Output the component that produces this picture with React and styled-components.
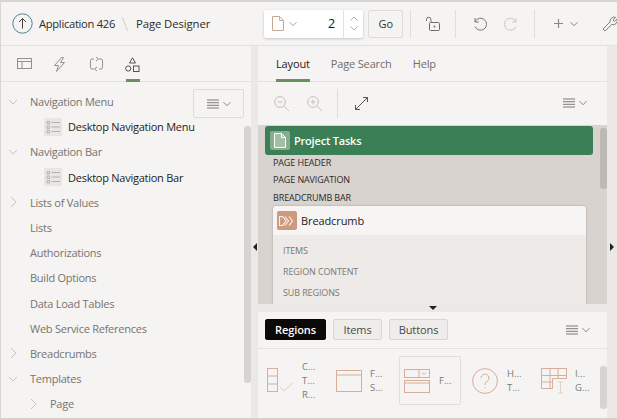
import React from "react";
import styled, { createGlobalStyle } from "styled-components";

const Global = createGlobalStyle`
  html, body { margin: 0; padding: 0; background: #f5f4f2; overflow: hidden; }
  * { box-sizing: border-box; }
  body { font-family: "Open Sans", "Noto Sans", sans-serif; }
`;

const Page = styled.div`
  width: 617px; height: 419px; display: flex; flex-direction: column; overflow: hidden;
  background: #f5f4f2; border-top: 2px solid #d6d5d3; border-left: 1px solid #d6d5d3; border-bottom: 1px solid #d0cfcd;
`;
const Header = styled.header`
  height: 44px; flex: none; display: flex; align-items: center; border-bottom: 1px solid #e3e1de; padding-left: 11px; white-space: nowrap;
`;
const Crumb = styled.span`
  font-size: ${p => p.$fs}px; color: #2b2b2b; letter-spacing: ${p => p.$ls}px;
  margin-left: ${p => p.$ml || 0}px;
`;
const Slash = styled.svg`margin-left: 7px; flex: none;`;
const PageBox = styled.div`
  margin-left: 54px; width: 99px; height: 28px; background: #fff; display: flex; align-items: center; padding-left: 8px;
  box-shadow: 0 1px 3px rgba(0,0,0,.2); border-radius: 2px; flex: none;
`;
const PageNum = styled.span`
  flex: 1; text-align: right; padding-right: 8px; font-size: 12.5px; color: #111;
`;
const Stepper = styled.div`
  width: 20px; height: 100%; border-left: 1px solid #e3e1de; display: flex; flex-direction: column; align-items: center; justify-content: space-around; padding: 4px 0;
`;
const GoButton = styled.button`
  margin-left: 5px; width: 35px; height: 28px; background: #f5f4f2; border: 1px solid #dedcd9; border-radius: 2px; padding: 0; font: inherit; font-size: 11px; color: #333; flex: none;
`;
const Divider = styled.span`
  width: 1px; height: ${p => p.$h || 28}px; background: #dfddda; flex: none; margin-left: ${p => p.$ml || 0}px;
`;
const HeadIcon = styled.svg`flex: none; margin-left: ${p => p.$ml || 0}px; display: block;`;

const Body = styled.div`flex: 1; min-height: 0; display: flex;`;
const LeftPane = styled.section`width: 250px; flex: none; display: flex; flex-direction: column; position: relative; overflow: hidden;`;
const Splitter = styled.div`
  flex: 1; min-width: 0; background: #ebe8e5; display: flex; align-items: center; justify-content: center; padding-top: 29px;
  ${p => p.$w ? `flex: none; width: ${p.$w}px;` : ""}
`;
const TabBar = styled.nav`
  height: 36px; flex: none; display: flex; border-bottom: 1px solid #e3e1de; padding-left: ${p => p.$pl}px; gap: ${p => p.$gap}px;
`;
const IconTab = styled.div`
  width: 14px; padding-top: 11px; height: 36px; border-bottom: ${p => p.$on ? "3px solid #688f5e" : "none"};
  & > svg { display: block; margin-left: -1px; }
`;
const TextTab = styled.div`
  height: 36px; padding-top: 10px; font-size: 11px; letter-spacing: -0.15px; white-space: nowrap;
  color: ${p => p.$on ? "#222" : "#6f6d6b"}; border-bottom: ${p => p.$on ? "3px solid #688f5e" : "none"};
`;
const Tree = styled.ul`list-style: none; margin: 0; padding: 7px 0 0; flex: 1;`;
const Row = styled.li`
  height: 25.2px; display: flex; align-items: center; white-space: nowrap;
  padding-left: ${p => p.$pl || 0}px;
`;
const Twist = styled.svg`width: 10px; height: 10px; margin-left: 7px; flex: none; display: block;`;
const NodeLabel = styled.span`
  font-size: 11px; letter-spacing: -0.25px; color: ${p => p.$dark ? "#1d1d1d" : "#77736f"};
  margin-left: ${p => p.$ml}px;
`;
const ListIcon = styled.span`
  width: 18px; height: 18px; background: #e8e6e3; border-radius: 1px; display: block; flex: none;
  & > svg { display: block; }
`;
const MenuButton = styled.div`
  position: absolute; left: 192px; top: 43px; width: 51px; height: 29px; border: 1px solid #dedcd9; background: #f5f4f2; border-radius: 2px;
  display: flex; align-items: center; justify-content: center; gap: 4px;
`;
const ScrollThumb = styled.div`
  position: absolute; left: ${p => p.$l}px; top: ${p => p.$t}px; width: 7px; height: ${p => p.$h}px; background: ${p => p.$c || "#d6d4d1"}; border-radius: 3px;
`;
const RightPane = styled.section`width: 349px; flex: none; display: flex; flex-direction: column; min-height: 0;`;
const Toolbar = styled.div`
  height: 39px; flex: none; display: flex; align-items: center; padding: 3px 20px 0 16px;
`;
const Push = styled.div`flex: 1;`;
const MenuGlyph = styled.span`display: flex; align-items: center; gap: 4px;`;
const Canvas = styled.div`
  margin-top: 4px; flex: 1; min-height: 0; background: #d8d3cf; position: relative; overflow: hidden; padding: 1px 14px 0 7px;
`;
const PageBar = styled.div`
  height: 29px; background: #3a7f56; border-radius: 3px; display: flex; align-items: center; padding-left: 5px; color: #fff; font-size: 11px; font-weight: 600; letter-spacing: -0.2px;
`;
const BadgeIcon = styled.span`
  width: 20px; height: 19px; border-radius: 2px; background: ${p => p.$bg}; display: flex; align-items: center; justify-content: center; margin-right: 4px; flex: none;
`;
const Slot = styled.div`
  font-size: 9px; line-height: 17.5px; height: 17.5px; color: #2c2a28; padding-left: 8px; white-space: nowrap; letter-spacing: -0.12px;
`;
const SlotList = styled.div`margin-top: -1.5px;`;
const RegionCard = styled.div`
  margin: 0 7px 0 8px; border-radius: 3px 3px 0 0; background: #edeae7; box-shadow: 0 0 2px rgba(0,0,0,.3); height: 120px;
`;
const CardHead = styled.div`
  height: 29px; background: #f6f5f3; border-radius: 3px 3px 0 0; display: flex; align-items: center; padding-left: 4px; font-size: 11px; color: #1c1c1c; letter-spacing: -0.1px;
`;
const CardSlots = styled.div`padding: 5px 0 0 10px;`;
const CardSlot = styled.div`
  font-size: 9px; height: 21px; line-height: 21px; color: #7c7874; white-space: nowrap; letter-spacing: -0.12px;
`;
const HSplit = styled.div`
  height: 8px; flex: none; background: #ebe8e5; display: flex; align-items: center; justify-content: center; padding-left: 1px;
`;
const Gallery = styled.div`flex: none; height: 106px; display: flex; flex-direction: column; position: relative;`;
const GalleryBar = styled.div`
  height: 37px; flex: none; display: flex; align-items: center; border-bottom: 1px solid #e3e1de; padding: 0 17px 1px 7px; gap: 7px;
`;
const Pill = styled.button`
  height: 21px; width: ${p => p.$w}px; padding: 0; font: inherit; font-size: 11px; letter-spacing: -0.1px; border-radius: 2px;
  background: ${p => p.$on ? "#0c0a09" : "#efedeb"}; color: ${p => p.$on ? "#fff" : "#4a4846"};
  border: 1px solid ${p => p.$on ? "#0c0a09" : "#d8d6d3"}; font-weight: ${p => p.$on ? 600 : 400};
`;
const ItemRow = styled.div`flex: 1; display: flex; padding: 7px 0 0 6px;`;
const Item = styled.div`
  height: 49px; width: ${p => p.$w}px; flex: none; display: flex; align-items: center; padding-left: ${p => p.$pl}px;
  border: 1px solid ${p => p.$sel ? "#e1dfdc" : "transparent"}; border-radius: 2px;
  & > svg { display: block; flex: none; }
`;
const ItemText = styled.div`
  margin-left: ${p => p.$ml}px; font-size: 9.5px; color: #7b7976; line-height: 14px; white-space: nowrap;
`;

const Chev = ({ x = 0, c = "#8a8886", s = 8 }) => (
  <svg width={s} height={s} viewBox="0 0 8 8" style={{ display: "block", flex: "none", marginLeft: x }}>
    <path d="M.5 2.2 4 5.8l3.5-3.6" fill="none" stroke={c} strokeWidth="1" />
  </svg>
);
const Burger = () => (
  <svg width="12" height="10" viewBox="0 0 12 10" style={{ display: "block" }}>
    <path d="M0 1h12M0 3.700h12M0 6.300h12M0 9h12" stroke="#7d7b79" strokeWidth="1" />
  </svg>
);
const MenuIcon = () => (<MenuGlyph><Burger /><Chev /></MenuGlyph>);
const Down = () => <Twist viewBox="0 0 10 10"><path d="M1 3l4 4 4-4" fill="none" stroke="#c6c3c0" strokeWidth="1" /></Twist>;
const Right = ({ ml }) => <Twist viewBox="0 0 10 10" style={ml ? { marginLeft: ml } : undefined}><path d="M3 0l5 5-5 5" fill="none" stroke="#c6c3c0" strokeWidth="1" /></Twist>;
const Blank = () => <Twist viewBox="0 0 10 10" />;
const List18 = () => (
  <ListIcon>
    <svg width="18" height="18" viewBox="0 0 18 18" fill="none">
      <path d="M7.500 4.500H16M7.500 9H16M7.500 13.500H16" stroke="#b5b2af" />
      <path d="M3 3.500h2.500v2.500H3zM3 8h2.500v2.500H3zM3 12.500h2.500V15H3z" stroke="#aaa7a4" strokeWidth=".8" />
    </svg>
  </ListIcon>
);
const Arrow = ({ d }) => {
  const p = { l: "M4 0v8L0 4z", r: "M0 0v8l4-4z", d: "M0 0h8L4 4z" }[d];
  return <svg width={d === "d" ? 8 : 4} height={d === "d" ? 4 : 8} viewBox={d === "d" ? "0 0 8 4" : "0 0 4 8"} style={{ display: "block" }}><path d={p} fill="#222" /></svg>;
};
const stroke = "#d6ae9a";
const soft = "#e0d2c6";

export default function App() {
  return (
    <Page>
      <Global />
      <Header>
        <HeadIcon width="21" height="21" viewBox="0 0 21 21" fill="none">
          <circle cx="10.500" cy="10.500" r="9.700" stroke="#4a8590" />
          <path d="M10.500 15.500v-10M7 9l3.500-3.500L14 9" stroke="#444" />
        </HeadIcon>
        <Crumb $ml={6} $fs={11.2} $ls={-0.3}>Application 426</Crumb>
        <Slash width="7" height="14" viewBox="0 0 7 14"><path d="M.5.500l5 13" stroke="#cfcdca" /></Slash>
        <Crumb $ml={7} $fs={11.3} $ls={-0.08}>Page Designer</Crumb>
        <PageBox>
          <svg width="12" height="15" viewBox="0 0 12 15" style={{ flex: "none" }}>
            <path d="M.5.500h7l4 4v10H.5z" fill="#fff" stroke="#c9a68f" /><path d="M7.500.5v4h4" fill="none" stroke="#b9b6b3" />
          </svg>
          <Chev x={5} c="#a3a19f" />
          <PageNum>2</PageNum>
          <Stepper>
            <svg width="8" height="5" viewBox="0 0 8 5"><path d="M.5 4.500 4 1l3.500 3.500" fill="none" stroke="#b5b3b1" /></svg>
            <svg width="8" height="5" viewBox="0 0 8 5"><path d="M.5.500 4 4 7.500.5" fill="none" stroke="#b5b3b1" /></svg>
          </Stepper>
        </PageBox>
        <GoButton>Go</GoButton>
        <Divider $ml={7} />
        <HeadIcon $ml={14} width="16" height="16" viewBox="0 0 16 16" fill="none">
          <rect x="4.500" y="6.500" width="10" height="8" rx="1" stroke="#6e6c6a" />
          <path d="M1.500 5V3.500a2.200 2.200 0 0 1 4.400 0V6" stroke="#6e6c6a" />
          <circle cx="9.500" cy="10.500" r=".9" fill="#6e6c6a" />
        </HeadIcon>
        <Divider $ml={14} />
        <HeadIcon $ml={16} width="15" height="15" viewBox="0 0 15 15" fill="none">
          <path d="M3 2v4h4" stroke="#777" /><path d="M3.200 5.500A6 6 0 1 1 3 10.500" stroke="#777" />
        </HeadIcon>
        <HeadIcon $ml={17} width="15" height="15" viewBox="0 0 15 15" fill="none">
          <path d="M12 2v4H8" stroke="#c9c7c5" /><path d="M11.800 5.500A6 6 0 1 0 12 10.500" stroke="#c9c7c5" />
        </HeadIcon>
        <Divider $ml={15} />
        <HeadIcon $ml={19} width="9" height="9" viewBox="0 0 9 9" fill="none"><path d="M4.500 0v9M0 4.500h9" stroke="#8a8886" strokeWidth="1.2" /></HeadIcon>
        <Chev x={7} />
        <HeadIcon $ml={24} width="16" height="16" viewBox="0 0 16 16" fill="none">
          <path d="M1 13 8 6a4.200 4.200 0 0 1 5.500-4.700L11 4l1.300 1.500L15 3a4.200 4.200 0 0 1-5.300 5.500L3 15z" stroke="#807e7c" />
        </HeadIcon>
      </Header>
      <Body>
        <LeftPane>
          <TabBar $pl={17} $gap={22}>
            <IconTab>
              <svg width="15" height="13" viewBox="0 0 15 13" fill="none">
                <rect x=".5" y="1.500" width="14" height="10" stroke="#94908c" /><path d="M.5 4.500h14M5 4.500v7" stroke="#94908c" />
              </svg>
            </IconTab>
            <IconTab>
              <svg width="13" height="15" viewBox="0 0 13 15" fill="none"><path d="M8.500.5 1.500 8.500h4l-2 6 8-9h-4l3-5z" stroke="#94908c" /></svg>
            </IconTab>
            <IconTab>
              <svg width="15" height="14" viewBox="0 0 15 14" fill="none">
                <path d="M5 2H3a1.500 1.500 0 0 0-1.500 1.500v7A1.500 1.500 0 0 0 3 12h2M10 12h2a1.500 1.500 0 0 0 1.500-1.500v-7A1.500 1.500 0 0 0 12 2h-2" stroke="#94908c" /><path d="M7 0 9.500 2 7 4M8 10l-2.500 2L8 14" stroke="#94908c" />
              </svg>
            </IconTab>
            <IconTab $on>
              <svg width="15" height="15" viewBox="0 0 15 15" fill="none">
                <path d="M7.500.8 10.500 6h-6z" stroke="#55524f" /><circle cx="3.200" cy="11.500" r="2.600" stroke="#55524f" /><rect x="8.500" y="9" width="5.500" height="5.500" stroke="#55524f" />
              </svg>
            </IconTab>
          </TabBar>
          <Tree>
            <Row><Down /><NodeLabel $ml={12}>Navigation Menu</NodeLabel></Row>
            <Row $pl={43}><List18 /><NodeLabel $dark $ml={6}>Desktop Navigation Menu</NodeLabel></Row>
            <Row><Down /><NodeLabel $ml={12}>Navigation Bar</NodeLabel></Row>
            <Row $pl={43}><List18 /><NodeLabel $dark $ml={6}>Desktop Navigation Bar</NodeLabel></Row>
            <Row><Right /><NodeLabel $ml={12}>Lists of Values</NodeLabel></Row>
            <Row><Blank /><NodeLabel $ml={12}>Lists</NodeLabel></Row>
            <Row><Blank /><NodeLabel $ml={12}>Authorizations</NodeLabel></Row>
            <Row><Blank /><NodeLabel $ml={12}>Build Options</NodeLabel></Row>
            <Row><Blank /><NodeLabel $ml={12}>Data Load Tables</NodeLabel></Row>
            <Row><Blank /><NodeLabel $ml={12}>Web Service References</NodeLabel></Row>
            <Row><Right /><NodeLabel $ml={12}>Breadcrumbs</NodeLabel></Row>
            <Row><Down /><NodeLabel $ml={12}>Templates</NodeLabel></Row>
            <Row><Right ml={27} /><NodeLabel $ml={12}>Page</NodeLabel></Row>
          </Tree>
          <MenuButton><MenuIcon /></MenuButton>
          <ScrollThumb $l={243} $t={80} $h={257} />
        </LeftPane>
        <Splitter $w={7}><Arrow d="l" /></Splitter>
        <RightPane>
          <TabBar $pl={18} $gap={21}>
            <TextTab $on>Layout</TextTab>
            <TextTab>Page Search</TextTab>
            <TextTab>Help</TextTab>
          </TabBar>
          <Toolbar>
            <svg width="15" height="15" viewBox="0 0 15 15" fill="none" style={{ display: "block" }}>
              <circle cx="6" cy="6" r="5.400" stroke="#c4c2c0" /><path d="M3.500 6h5M10 10l5 5" stroke="#c4c2c0" />
            </svg>
            <svg width="15" height="15" viewBox="0 0 15 15" fill="none" style={{ display: "block", marginLeft: 18 }}>
              <circle cx="6" cy="6" r="5.400" stroke="#c4c2c0" /><path d="M3.500 6h5M6 3.500v5M10 10l5 5" stroke="#c4c2c0" />
            </svg>
            <Divider $ml={15} $h={29} />
            <svg width="13" height="13" viewBox="0 0 13 13" fill="none" style={{ display: "block", marginLeft: 17 }}>
              <path d="M.5 12.500l12-12M8 .5h4.500V5M.5 8v4.500H5" stroke="#555" />
            </svg>
            <Push />
            <MenuIcon />
          </Toolbar>
          <Canvas>
            <PageBar>
              <BadgeIcon $bg="#88ad8c">
                <svg width="12" height="15" viewBox="0 0 12 15"><path d="M.5.500h7l4 4v10H.5z" fill="rgba(255,255,255,.22)" stroke="#fff" /><path d="M7.500.5v4h4" fill="none" stroke="#fff" /></svg>
              </BadgeIcon>
              Project Tasks
            </PageBar>
            <SlotList>
              <Slot>PAGE HEADER</Slot>
              <Slot>PAGE NAVIGATION</Slot>
              <Slot>BREADCRUMB BAR</Slot>
            </SlotList>
            <RegionCard>
              <CardHead>
                <BadgeIcon $bg="#cc9a7e">
                  <svg width="16" height="10" viewBox="0 0 16 10" fill="none"><path d="M.5.500h3l3.500 4.500L3.500 9.500h-3zM6 .5l3.500 4.500L6 9.500M10 .5l3.500 4.500L10 9.500" stroke="#fbeee6" strokeWidth="1.200" /></svg>
                </BadgeIcon>
                Breadcrumb
              </CardHead>
              <CardSlots>
                <CardSlot>ITEMS</CardSlot>
                <CardSlot>REGION CONTENT</CardSlot>
                <CardSlot>SUB REGIONS</CardSlot>
              </CardSlots>
            </RegionCard>
            <ScrollThumb $l={342} $t={3} $h={61} $c="#bdb9b5" />
          </Canvas>
          <HSplit><Arrow d="d" /></HSplit>
          <Gallery>
            <GalleryBar>
              <Pill $on $w={61}>Regions</Pill>
              <Pill $w={49}>Items</Pill>
              <Pill $w={59}>Buttons</Pill>
              <Push />
              <MenuIcon />
            </GalleryBar>
            <ItemRow>
              <Item $w={69} $pl={2}>
                <svg width="27" height="25" viewBox="0 0 27 25" fill="none">
                  <rect x=".5" y=".5" width="10" height="23" stroke={stroke} /><path d="M.5 8h10M.5 16h10" stroke={stroke} /><path d="M13 19l4 4 9-8" stroke={soft} />
                </svg>
                <ItemText $ml={8}>C...<br />T...<br />R...</ItemText>
              </Item>
              <Item $w={66} $pl={2}>
                <svg width="26" height="22" viewBox="0 0 26 22" fill="none">
                  <rect x=".5" y=".5" width="25" height="21" stroke={stroke} /><path d="M.5 5h25" stroke={stroke} />
                </svg>
                <ItemText $ml={8}>F...<br />S...</ItemText>
              </Item>
              <Item $w={62} $pl={4} $sel>
                <svg width="26" height="24" viewBox="0 0 26 24" fill="none">
                  <rect x=".5" y=".5" width="25" height="8" stroke={stroke} /><path d="M15 .5v8M18 3.500l2 2 2-2" stroke={stroke} /><rect x=".5" y="11.500" width="25" height="12" stroke={stroke} /><path d="M.5 14h25" stroke={stroke} />
                </svg>
                <ItemText $ml={9}>F...</ItemText>
              </Item>
              <Item $w={70} $pl={10}>
                <svg width="26" height="26" viewBox="0 0 26 26" fill="none">
                  <circle cx="13" cy="13" r="12.400" stroke={stroke} /><path d="M9 10a4 4 0 1 1 6 3.500c-1.500 1-2 1.700-2 3.500M13 19v1.500" stroke={stroke} />
                </svg>
                <ItemText $ml={9}>H...<br />T...</ItemText>
              </Item>
              <Item $w={66} $pl={9}>
                <svg width="27" height="26" viewBox="0 0 27 26" fill="none">
                  <path d="M.5.500h25v10h-14v10H.5zM.5 7.500h25M.5 14h11M9 .5v20M17 .5v10" stroke={stroke} /><path d="M17 14h5M17 25h5M19.500 14v11" stroke={soft} />
                </svg>
                <ItemText $ml={7}>I...<br />G...</ItemText>
              </Item>
            </ItemRow>
            <ScrollThumb $l={342} $t={54} $h={43} />
          </Gallery>
        </RightPane>
        <Splitter><Arrow d="r" /></Splitter>
      </Body>
    </Page>
  );
}
